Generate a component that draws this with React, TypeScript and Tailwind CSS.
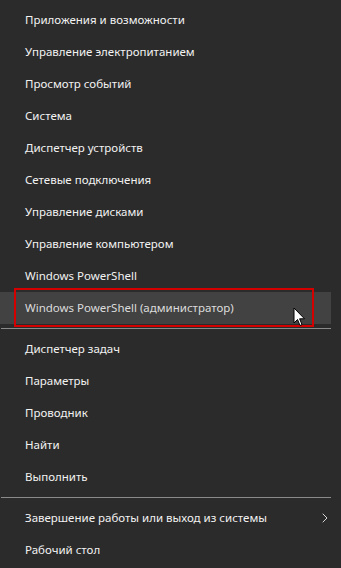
import { ChevronRight } from 'lucide-react';

const topItems = [
  'Приложения и возможности',
  'Управление электропитанием',
  'Просмотр событий',
  'Система',
  'Диспетчер устройств',
  'Сетевые подключения',
  'Управление дисками',
  'Управление компьютером',
  'Windows PowerShell',
];

const midItems = ['Диспетчер задач', 'Параметры', 'Проводник', 'Найти', 'Выполнить'];

function Item({ label }: { label: string }) {
  return (
    <div className="h-8 flex items-center pl-[25px] text-[11.5px] text-[#f2f2f2]">{label}</div>
  );
}

function Separator() {
  return (
    <div className="py-1 pl-[1px] pr-[10px]">
      <div className="h-px bg-[#8a8a8a]" />
    </div>
  );
}

export default function App() {
  return (
    <div
      className="w-[341px] h-[568px] bg-[#2b2b2b] pt-1 overflow-hidden select-none"
      style={{ fontFamily: '"Noto Sans", "Open Sans", sans-serif' }}
    >
      {topItems.map((t) => (
        <Item key={t} label={t} />
      ))}

      <div className="relative h-8 mr-[10px] bg-[#424242] flex items-center pl-[25px] text-[11.5px] text-[#dcdcdc]">
        Windows PowerShell (администратор)
        <div className="absolute left-[14px] top-[-4px] w-[300px] h-[39px] border-2 border-[#d40000]" />
        <svg
          className="absolute left-[293px] top-[15px]"
          width="13"
          height="20"
          viewBox="0 0 13 20"
        >
          <path d="M1 1 L1 16 L4.5 12.5 L7 18.5 L9 17.6 L6.6 11.8 L11.5 11.8 Z" fill="#ffffff" stroke="#000000" strokeWidth="1" />
        </svg>
      </div>

      <Separator />

      {midItems.map((t) => (
        <Item key={t} label={t} />
      ))}

      <Separator />

      <div className="h-8 flex items-center pl-[25px] pr-[8px] text-[11.5px] text-[#f2f2f2]">
        <span className="flex-1">Завершение работы или выход из системы</span>
        <ChevronRight className="w-4 h-4 text-[#d8d8d8]" strokeWidth={1.5} />
      </div>
      <Item label="Рабочий стол" />
    </div>
  );
}
